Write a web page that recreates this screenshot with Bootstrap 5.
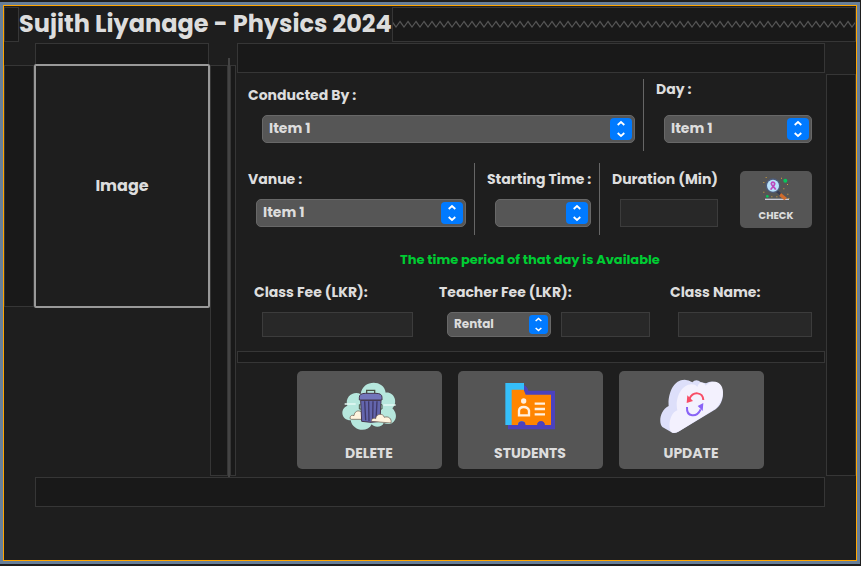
<!DOCTYPE html>
<html lang="en" data-bs-theme="dark">
<head>
<meta charset="utf-8">
<meta name="viewport" content="width=device-width, initial-scale=1">
<title>Class details</title>
<link href="https://cdn.jsdelivr.net/npm/bootstrap@5.3.0/dist/css/bootstrap.min.css" rel="stylesheet">
<style>
  body { background: #1e1e1e; color: #dddddd; font-family: Poppins, Inter, sans-serif; font-weight: 600; font-size: 14px; line-height: 20px; padding: 2px 1px 2px 0; }
  .frame { border: 3px solid #677f99; }
  .frame-inner { border: 1px solid #ffa500; padding-top: 1px; }
  .filler { background: #191919; border: 1px solid #363636; }
  .title-bar { height: 35px; }
  .title-bar h1 { color: #dddddd; font-size: 24px; line-height: 34px; font-weight: 700; white-space: nowrap; }
  .title-pad { width: 15px; }
  .rail { width: 30px; flex: none; }
  .rail-left { height: 242px; margin-top: 23px; }
  .rail-right { margin-top: 32px; margin-bottom: 1px; }
  .photo-col { width: 176px; flex: none; }
  .photo-top { height: 22px; margin: 1px 1px -1px; border-bottom: 0; }
  .photo { height: 244px; border: 2px solid #999999; border-radius: 2px; background: #1e1e1e; font-size: 16px; font-weight: 700; }
  .split { width: 26px; flex: none; margin-top: 16px; }
  .split .filler { margin: 7px 0 1px; }
  .split-bar { width: 2px; background: #444444; }
  .split-edge { width: 6px; }
  .band { height: 30px; margin: 1px 1px 0; }
  .thin-band { height: 12px; margin: 14px 1px 0; }
  .form-area { padding: 6px 14px 0 12px; }
  .line { display: grid; }
  .line-a { grid-template-columns: 395fr 1px 168fr; min-height: 72px; }
  .line-b { grid-template-columns: 226fr 1px 124fr 1px 118fr 94px; min-height: 72px; margin-top: 12px; }
  .line-c { grid-template-columns: 185fr 231fr 142fr; margin-top: 12px; padding-left: 6px; }
  .rule { background: #666666; }
  .field { display: flex; flex-direction: column; gap: 10px; padding-top: 6px; min-width: 0; }
  .field-top { padding-top: 0; gap: 16px; }
  .field label { font-size: 14px; font-weight: 700; white-space: nowrap; }
  .before-rule { margin-right: 8px; }
  .after-rule { margin-left: 12px; }
  .indent { margin-left: 8px; }
  .indent-lg { margin-left: 14px; }
  .space-wide { margin-right: 26px; }
  .space-mid { margin-right: 20px; }
  .form-control, .form-control:focus { background: #282828; border: 1px solid #3c3c3c; border-radius: 0; height: 28px; padding: 0 6px; width: auto; min-width: 0; font: inherit; box-shadow: none; }
  .form-select { background-color: #565656; border: 1px solid #686868; border-radius: 5px; height: 28px; padding: 0 28px 2px 6px; color: #dddddd; font-size: 14px; font-weight: 700; line-height: 24px; width: auto; min-width: 0;
    background-image: url("data:image/svg+xml,%3Csvg xmlns='http://www.w3.org/2000/svg' viewBox='0 0 22 22'%3E%3Crect width='22' height='22' rx='4' fill='%23007aff'/%3E%3Cpath d='M7.7 7 11 4l3.3 3M7.7 15l3.3 3 3.3-3' fill='none' stroke='white' stroke-width='1.8'/%3E%3C/svg%3E");
    background-position: right 2px center; background-size: 22px 22px; }
  .line-c .form-control, .line-c .form-select { height: 25px; }
  .line-c .form-select { font-size: 12px; line-height: 22px; background-size: 19px 19px; }
  .rate { display: grid; grid-template-columns: 104fr 89fr; gap: 10px; }
  .status { color: #00cc33; font-size: 13px; font-weight: 700; margin-top: 15px; }
  .tool, .tool:hover { background: #555555; color: #dddddd; border: 0; border-radius: 5px; font-weight: 700; display: flex; flex-direction: column; align-items: center; }
  .tool-lg { width: 145px; height: 98px; padding: 6px 0 0; font-size: 14px; gap: 6px; line-height: 20px; }
  .tool-sm { height: 57px; padding: 4px 0 0; font-size: 10px; line-height: 14px; gap: 6px; margin: 8px 0 0 22px; }
  .tools { gap: 16px; padding: 8px 2px 8px 0; }
  .bottom-band { height: 30px; margin: 0 31px; }
</style>
<script src="https://cdn.jsdelivr.net/npm/bootstrap@5.3.0/dist/js/bootstrap.bundle.min.js" defer></script>
</head>
<body class="min-vh-100 d-flex">
<div class="frame flex-fill d-flex">
<div class="frame-inner flex-fill">

  <header class="title-bar d-flex">
    <div class="filler title-pad"></div>
    <h1 class="m-0">Sujith Liyanage - Physics 2024</h1>
    <div class="filler flex-fill overflow-hidden">
      <svg width="100%" height="33" class="d-block" aria-hidden="true">
        <defs><pattern id="zigzag" width="8" height="33" patternUnits="userSpaceOnUse"><path d="M-1 13.5 3 19 7 13.5 11 19" fill="none" stroke="#555555" stroke-width="1.2"/></pattern></defs>
        <rect width="100%" height="33" fill="url(#zigzag)"/>
      </svg>
    </div>
  </header>

  <div class="d-flex">
    <div class="filler rail rail-left"></div>
    <div class="photo-col">
      <div class="filler photo-top"></div>
      <div class="photo d-flex align-items-center justify-content-center">Image</div>
    </div>
    <div class="split d-flex">
      <div class="filler flex-fill"></div>
      <div class="split-bar"></div>
      <div class="filler split-edge"></div>
    </div>

    <main class="flex-fill">
      <div class="filler band"></div>
      <form class="form-area">
        <div class="line line-a">
          <div class="field before-rule">
            <label for="teacher">Conducted By :</label>
            <select id="teacher" class="form-select indent-lg"><option>Item 1</option></select>
          </div>
          <div class="rule"></div>
          <div class="field field-top after-rule">
            <label for="day">Day :</label>
            <select id="day" class="form-select indent"><option>Item 1</option></select>
          </div>
        </div>

        <div class="line line-b">
          <div class="field before-rule">
            <label for="venue">Vanue :</label>
            <select id="venue" class="form-select indent"><option>Item 1</option></select>
          </div>
          <div class="rule"></div>
          <div class="field after-rule before-rule">
            <label for="start">Starting Time :</label>
            <select id="start" class="form-select indent"><option></option></select>
          </div>
          <div class="rule"></div>
          <div class="field after-rule">
            <label for="duration">Duration (Min)</label>
            <input id="duration" type="text" class="form-control indent">
          </div>
          <button type="button" class="btn tool tool-sm">
            <svg width="36" height="28" viewBox="69 30 108 84" aria-hidden="true">
              <path d="M90 103H162" stroke="#c9cbd8" stroke-width="4"/>
              <path d="m125 78 12 10" stroke="#363b52" stroke-width="7"/>
              <path d="m138 84 18 15-8 7-15-13z" fill="#cf6b2b"/>
              <circle cx="114" cy="62" r="22" fill="#4d5c7c"/>
              <circle cx="114" cy="62" r="18" fill="#b9e2fb"/>
              <path d="M107 74c3-7 14-13 12-19-2-5-9-5-10 0-2 6 10 11 13 19" fill="none" stroke="#bd48bd" stroke-width="5"/>
              <circle cx="151" cy="47" r="6" fill="#08c65b"/><circle cx="97" cy="94" r="4" fill="#08c65b"/>
              <g fill="#d4a13c"><path d="M92 36h3v3h-3zM138 38h3v3h-3zM85 51h3v3h-3zM156 57h3v3h-3zM85 80h3v3h-3zM157 86h3v3h-3zM124 94h3v3h-3zM145 70h3v3h-3zM160 99h3v3h-3zM109 94h3v3h-3z"/></g>
            </svg>
            CHECK
          </button>
        </div>

        <div class="status text-center" role="status">The time period of that day is Available</div>

        <div class="line line-c">
          <div class="field pt-0 space-wide">
            <label for="fee">Class Fee (LKR):</label>
            <input id="fee" type="text" class="form-control indent">
          </div>
          <div class="field pt-0 space-mid">
            <label for="rate">Teacher Fee (LKR):</label>
            <div class="indent rate">
              <select id="rate" class="form-select"><option>Rental</option></select>
              <input type="text" class="form-control" aria-label="Teacher fee amount">
            </div>
          </div>
          <div class="field pt-0">
            <label for="cname">Class Name:</label>
            <input id="cname" type="text" class="form-control indent">
          </div>
        </div>
      </form>

      <div class="filler thin-band"></div>
      <div class="tools d-flex justify-content-center">
        <button type="button" class="btn tool tool-lg">
          <svg width="64" height="60" viewBox="21 21 192 180" aria-hidden="true">
            <path d="M62 151c-29-1-33-35-10-44-9-27 20-46 40-34 5-45 70-45 75-5 26-3 38 30 20 47 25 25 3 58-26 44-5 14-28 15-36 4-12 26-57 21-63-12z" fill="#b6e7dd"/>
            <path d="M44 102h33M160 105h37" stroke="#e5faf5" stroke-width="4"/>
            <path d="M60 144c0-7 7-10 12-7 1-16 20-20 25-5h20v16H64q-4 0-4-4z" fill="#fff4df" stroke="#665044" stroke-width="2"/>
            <path d="M92 91h61l-3 63q-26 6-55 0z" fill="#6365ad" stroke="#45364d" stroke-width="3"/>
            <path d="M104 94l3 57M116 94l1 59M129 94l-1 59M141 94l-3 57" stroke="#403967" stroke-width="4"/>
            <path d="M110 70V61h24v9" fill="none" stroke="#4b5547" stroke-width="4"/>
            <path d="M88 82q0-12 18-12h32q18 0 18 12v8H88z" fill="#7376bb" stroke="#45364d" stroke-width="3"/>
            <path d="M92 104h-4v13h5M152 104h4v13h-5" fill="none" stroke="#4b5547" stroke-width="3"/>
            <path d="M124 154c0-10 9-10 13-8 1-16 23-17 26-4 13-5 23 5 20 17z" fill="#fff4df" stroke="#665044" stroke-width="2"/>
          </svg>
          DELETE
        </button>
        <button type="button" class="btn tool tool-lg">
          <svg width="64" height="60" viewBox="25 21 192 180" aria-hidden="true">
            <path d="M55 165V178H196V62H116Q112 48 102 46V165z" fill="#4b42bd"/>
            <path d="M47 39H103V165H47z" fill="#35bffa"/>
            <path d="M66 59H102L108 74H184V165H165a11 11 0 0 0-22 0H107a11 11 0 0 0-22 0H66z" fill="#ff8500"/>
            <path d="M85 165a11 11 0 0 1 22 0zM143 165a11 11 0 0 1 22 0z" fill="#4b42bd"/>
            <circle cx="102" cy="93" r="8" fill="#fff0df"/>
            <path d="M88 136V122q1-11 14-11t16 11v14z" fill="none" stroke="#fff0df" stroke-width="7"/>
            <path d="M135 101h31M135 117h31M135 133h31" stroke="#fff0df" stroke-width="7"/>
          </svg>
          STUDENTS
        </button>
        <button type="button" class="btn tool tool-lg">
          <svg width="64" height="60" viewBox="28 21 192 180" aria-hidden="true">
            <path d="M68 188 38 171C27 161 29 122 57 108 54 73 70 29 105 29q12 0 23 8 11-12 26 0l15 3q18-11 36 0c22 15 19 60-7 78l-112 67q-9 6-18 3z" fill="#dddffa"/>
            <path d="M70 188c-17-1-14-58 13-67-8-33 11-77 42-78 11 0 15 4 18 8 4-16 17-19 25-4 12-10 25-16 40-7 21 14 12 57-11 76L88 184q-9 5-18 4z" fill="#f3f1fe"/>
            <path d="M161 90c-2-25-31-27-42-3" fill="none" stroke="#f84d66" stroke-width="6"/>
            <path d="M111 99l2-23 17 17z" fill="#f84d66"/>
            <path d="M112 111c-2 31 29 33 41 7" fill="none" stroke="#8963f6" stroke-width="6"/>
            <path d="M161 99l-2 24-15-15z" fill="#8963f6"/>
          </svg>
          UPDATE
        </button>
      </div>
    </main>
    <div class="filler rail rail-right"></div>
  </div>
  <div class="filler bottom-band"></div>
</div>
</div>
</body>
</html>
